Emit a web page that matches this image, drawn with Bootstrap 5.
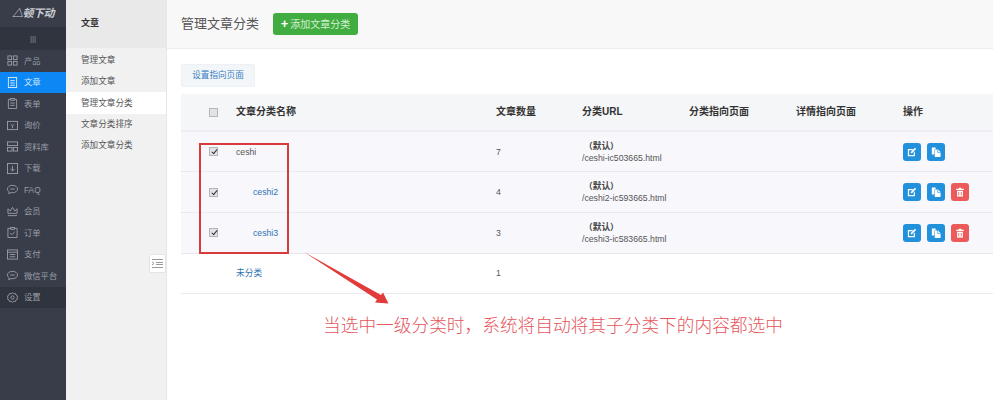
<!DOCTYPE html>
<html lang="zh">
<head>
    <meta charset="UTF-8">
    <meta name="viewport" content="width=device-width, initial-scale=1.0">
    <title>管理文章分类</title>
    <link href="https://cdn.jsdelivr.net/npm/bootstrap@5.3.3/dist/css/bootstrap.min.css" rel="stylesheet">
    <style>
        html, body { height: 400px; overflow: hidden; }
        body { font-family: "Liberation Sans", "Noto Sans CJK SC", sans-serif; font-size: 9px; color: #444; background: #fff; position: relative; }
        .side-main { width: 66px; height: 400px; background: #383d49; color: #9a9ea7; flex: none; font-size: 8.3px; }
        .side-logo { height: 27px; color: #c9ccd1; font-size: 11px; font-style: italic; font-weight: 700; letter-spacing: -.5px; }
        .side-toggle { height: 23px; background: #30343f; color: #8b8e96; font-size: 8px; font-weight: 300; }
        .side-item { height: 21.5px; padding-left: 7px; gap: 6px; color: #9a9ea7; text-decoration: none; }
        .side-item svg { width: 11px; height: 11px; flex: none; }
        .side-item.on { background: #0c87f4; color: #d8ecff; }
        .side-item.dim { background: #2f343e; }
        .side-sub { width: 101px; height: 400px; background: #f1f1f1; border-right: 1px solid #e6e6e6; flex: none; position: relative; font-size: 8.6px; }
        .sub-head { height: 48px; background: #e9e9e9; padding-left: 15px; color: #333; font-weight: 700; font-size: 9px; }
        .sub-list { padding-top: 2px; }
        .sub-item { height: 21.2px; padding-left: 15px; color: #555; text-decoration: none; }
        .sub-item.on { background: #fff; }
        .sub-fold { position: absolute; right: 0; top: 254px; width: 17px; height: 19px; background: #fff; border: 1px solid #e4e4e4; border-radius: 2px; }
        .page-head { height: 49px; background: #f8f8f8; border-bottom: 1px solid #ececec; padding-left: 14px; gap: 14px; }
        .page-title { font-size: 13px; color: #555; margin: 0; font-weight: 400; }
        .add-btn { background: #41ad41; color: #d6f0d6; font-size: 10px; height: 22px; width: 85px; padding: 0; border: 0; border-radius: 3px; }
        .add-btn b { color: #fff; font-size: 13px; line-height: 10px; margin-right: 2px; }
        .page-body { padding: 15px 0 0 14px; }
        .link-btn { display: flex; align-items: center; justify-content: center; width: 74px; height: 23px; padding: 0; background: #f3f6f9; border: 1px solid #edf0f4; border-radius: 2px; color: #3a7fc4; font-size: 8.6px; }
        .cat-table { width: 812px; table-layout: fixed; margin: 7px 0 0; font-size: 8.7px; }
        .cat-table th, .cat-table td { padding: 0; vertical-align: middle; border-bottom: 1px solid #e9e9ef; color: #555; line-height: 12px; }
        .cat-table th { height: 37px; background: #f5f6f8; color: #333; font-size: 10px; border-bottom: 2px solid #eeeff2; }
        .cat-table td { height: 40.7px; background: #fff; }
        .cat-table tr.picked td { background: #f8f7fc; }
        .cat-table a { color: #2e74b5; text-decoration: none; }
        .check-cell { padding-left: 28px !important; }
        .sub-name { padding-left: 17px !important; }
        .fake-check { display: block; width: 9px; height: 9px; background: #e2e3e6; border: 1px solid #b4b6bb; position: relative; }
        .fake-check.ticked::after { content: ""; position: absolute; left: 2.5px; top: 0; width: 3px; height: 6px; border: solid #333; border-width: 0 1px 1px 0; transform: rotate(40deg); }
        .act-row { gap: 6px; }
        .act-btn { width: 18px; height: 18px; border: 0; padding: 0; border-radius: 3px; background: #2191dc; }
        .act-btn.del { background: #ec5a5a; }
        .act-btn svg { width: 10px; height: 10px; display: block; margin: auto; }
        .url-tag { color: #444; font-weight: 700; padding-left: 2px; }
        .pick-box { position: absolute; left: 199px; top: 143px; width: 90px; height: 111px; border: 2px solid #d93a3a; pointer-events: none; }
        .pick-arrow { position: absolute; left: 300px; top: 248px; width: 92px; height: 60px; }
        .note-text { position: absolute; left: 323px; top: 312px; font-family: "Noto Sans CJK SC", sans-serif; font-weight: 300; font-size: 17.7px; line-height: 24px; color: #e5555c; white-space: nowrap; }
    </style>
</head>
<body>
<svg width="0" height="0" class="position-absolute">
    <symbol id="i-grid" viewBox="0 0 12 12" fill="none" stroke="currentColor"><rect x="1" y="1" width="4" height="4"/><rect x="7" y="1" width="4" height="4"/><rect x="1" y="7" width="4" height="4"/><rect x="7" y="7" width="4" height="4"/></symbol>
    <symbol id="i-doc" viewBox="0 0 12 12" fill="none" stroke="currentColor"><rect x="1.5" y=".5" width="9" height="11"/><path d="M3.5 4h5M3.5 6.5h5M3.5 9h5"/></symbol>
    <symbol id="i-form" viewBox="0 0 12 12" fill="none" stroke="currentColor"><path d="M4 1.500H1.500v10h9v-10H8"/><rect x="4" y=".5" width="4" height="2"/><path d="M3.500 5.500h5M3.500 8h5"/></symbol>
    <symbol id="i-quote" viewBox="0 0 12 12" fill="none" stroke="currentColor"><rect x=".5" y="1.500" width="11" height="9"/><path d="M4 4.500l2 2 2-2M6 6.500V9"/></symbol>
    <symbol id="i-lib" viewBox="0 0 12 12" fill="none" stroke="currentColor"><rect x=".5" y="1" width="11" height="4"/><rect x=".5" y="7" width="5" height="4"/><rect x="7" y="7" width="4.500" height="4"/></symbol>
    <symbol id="i-down" viewBox="0 0 12 12" fill="none" stroke="currentColor"><rect x=".5" y=".5" width="11" height="11"/><path d="M6 3v5.500M3.800 6.500L6 8.700l2.200-2.200"/></symbol>
    <symbol id="i-chat" viewBox="0 0 12 12" fill="none" stroke="currentColor"><path d="M6 1.500c3 0 5.500 1.600 5.500 4s-2.500 4-5.500 4c-.6 0-1.200 0-1.800-.2L2 10.800l.3-2.300C1.200 7.700.5 6.700.5 5.500c0-2.400 2.500-4 5.500-4z"/><path d="M3.500 5.500h5"/></symbol>
    <symbol id="i-crown" viewBox="0 0 12 12" fill="none" stroke="currentColor"><path d="M1 3l2.500 2.500L6 1.500l2.500 4L11 3v5H1zM1 10.500h10"/></symbol>
    <symbol id="i-order" viewBox="0 0 12 12" fill="none" stroke="currentColor"><path d="M4 1.500H1v10h10v-10H8"/><rect x="4" y=".5" width="4" height="2"/><path d="M3.500 6.500l2 2 3-3.500"/></symbol>
    <symbol id="i-pay" viewBox="0 0 12 12" fill="none" stroke="currentColor"><rect x=".5" y="1" width="11" height="10"/><path d="M.5 3.500h11M3 6h6M3 8.500h6"/></symbol>
    <symbol id="i-gear" viewBox="0 0 12 12" fill="none" stroke="currentColor"><path d="M6 .7l1.400 1.200 1.800-.2.700 1.700 1.600.9-.5 1.700.5 1.700-1.600.9-.7 1.700-1.800-.2L6 11.300l-1.400-1.200-1.800.2-.7-1.700-1.600-.9.500-1.700-.5-1.700 1.600-.9.700-1.700 1.800.2z"/><circle cx="6" cy="6" r="1.800"/></symbol>
    <symbol id="i-edit" viewBox="0 0 12 12"><path d="M1 2.500h6.500L6 4H2.500v5.500H8V7l1.500-1.500v5.500H1z" fill="#fff"/><path d="M4.500 7.500V6l5-5L11 2.500l-5 5z" fill="#fff"/></symbol>
    <symbol id="i-copy" viewBox="0 0 12 12"><path d="M1 .5h4.500V3H4v6H1z" fill="#fff"/><path d="M4.500 3h4L11.500 6v6h-7z" fill="#fff"/><path d="M8 3v3.500h3.500" fill="none" stroke="#2191dc" stroke-width=".8"/></symbol>
    <symbol id="i-trash" viewBox="0 0 12 12" fill="#fff"><path d="M4.500 1h3v1H10.500v1.500h-9V2h3z"/><path d="M2.500 4.500h7V11.500h-7z"/><path d="M4.500 6v4M7.500 6v4" stroke="#ec5a5a"/></symbol>
</svg>

<div class="d-flex">
    <nav class="side-main d-flex flex-column">
        <div class="side-logo d-flex align-items-center justify-content-center">△顿下动</div>
        <div class="side-toggle d-flex align-items-center justify-content-center">|||</div>
        <a class="side-item d-flex align-items-center" href="#"><svg><use href="#i-grid"/></svg>产品</a>
        <a class="side-item on d-flex align-items-center" href="#"><svg><use href="#i-doc"/></svg>文章</a>
        <a class="side-item d-flex align-items-center" href="#"><svg><use href="#i-form"/></svg>表单</a>
        <a class="side-item d-flex align-items-center" href="#"><svg><use href="#i-quote"/></svg>询价</a>
        <a class="side-item d-flex align-items-center" href="#"><svg><use href="#i-lib"/></svg>资料库</a>
        <a class="side-item d-flex align-items-center" href="#"><svg><use href="#i-down"/></svg>下载</a>
        <a class="side-item d-flex align-items-center" href="#"><svg><use href="#i-chat"/></svg>FAQ</a>
        <a class="side-item d-flex align-items-center" href="#"><svg><use href="#i-crown"/></svg>会员</a>
        <a class="side-item d-flex align-items-center" href="#"><svg><use href="#i-order"/></svg>订单</a>
        <a class="side-item d-flex align-items-center" href="#"><svg><use href="#i-pay"/></svg>支付</a>
        <a class="side-item d-flex align-items-center" href="#"><svg><use href="#i-chat"/></svg>微信平台</a>
        <a class="side-item dim d-flex align-items-center" href="#"><svg><use href="#i-gear"/></svg>设置</a>
    </nav>

    <aside class="side-sub">
        <div class="sub-head d-flex align-items-center">文章</div>
        <div class="sub-list">
            <a class="sub-item d-flex align-items-center" href="#">管理文章</a>
            <a class="sub-item d-flex align-items-center" href="#">添加文章</a>
            <a class="sub-item on d-flex align-items-center" href="#">管理文章分类</a>
            <a class="sub-item d-flex align-items-center" href="#">文章分类排序</a>
            <a class="sub-item d-flex align-items-center" href="#">添加文章分类</a>
        </div>
        <div class="sub-fold d-flex align-items-center justify-content-center">
            <svg width="11" height="9" viewBox="0 0 11 9" fill="none" stroke="#999"><path d="M0 .5h11M4 3.500h7M4 5.500h7M0 8.500h11M0 3l2 1.500L0 6"/></svg>
        </div>
    </aside>

    <main class="flex-grow-1">
        <div class="page-head d-flex align-items-center">
            <h1 class="page-title">管理文章分类</h1>
            <button type="button" class="btn add-btn"><b>+</b>添加文章分类</button>
        </div>
        <div class="page-body">
            <button type="button" class="btn link-btn">设置指向页面</button>
            <table class="table cat-table">
                <colgroup>
                    <col style="width:55px"><col style="width:260px"><col style="width:86px">
                    <col style="width:107px"><col style="width:107px"><col style="width:107px"><col style="width:90px">
                </colgroup>
                <thead>
                <tr>
                    <th class="check-cell"><span class="fake-check"></span></th>
                    <th>文章分类名称</th><th>文章数量</th><th>分类URL</th><th>分类指向页面</th><th>详情指向页面</th><th>操作</th>
                </tr>
                </thead>
                <tbody>
                <tr class="picked">
                    <td class="check-cell"><span class="fake-check ticked"></span></td>
                    <td>ceshi</td><td>7</td>
                    <td><div class="url-tag">（默认）</div>/ceshi-ic503665.html</td><td></td><td></td>
                    <td><div class="d-flex act-row">
                        <button type="button" class="btn act-btn"><svg><use href="#i-edit"/></svg></button>
                        <button type="button" class="btn act-btn"><svg><use href="#i-copy"/></svg></button>
                    </div></td>
                </tr>
                <tr class="picked">
                    <td class="check-cell"><span class="fake-check ticked"></span></td>
                    <td class="sub-name"><a href="#">ceshi2</a></td><td>4</td>
                    <td><div class="url-tag">（默认）</div>/ceshi2-ic593665.html</td><td></td><td></td>
                    <td><div class="d-flex act-row">
                        <button type="button" class="btn act-btn"><svg><use href="#i-edit"/></svg></button>
                        <button type="button" class="btn act-btn"><svg><use href="#i-copy"/></svg></button>
                        <button type="button" class="btn act-btn del"><svg><use href="#i-trash"/></svg></button>
                    </div></td>
                </tr>
                <tr class="picked">
                    <td class="check-cell"><span class="fake-check ticked"></span></td>
                    <td class="sub-name"><a href="#">ceshi3</a></td><td>3</td>
                    <td><div class="url-tag">（默认）</div>/ceshi3-ic583665.html</td><td></td><td></td>
                    <td><div class="d-flex act-row">
                        <button type="button" class="btn act-btn"><svg><use href="#i-edit"/></svg></button>
                        <button type="button" class="btn act-btn"><svg><use href="#i-copy"/></svg></button>
                        <button type="button" class="btn act-btn del"><svg><use href="#i-trash"/></svg></button>
                    </div></td>
                </tr>
                <tr>
                    <td></td><td><a href="#">未分类</a></td><td>1</td><td></td><td></td><td></td><td></td>
                </tr>
                </tbody>
            </table>
        </div>
    </main>
</div>

<!-- annotation drawn over the screenshot -->
<div class="pick-box"></div>
<svg class="pick-arrow" viewBox="0 0 92 60"><path d="M4 4L81 47 83 44.500 88.500 55.500 75 54.500 77 51.500z" fill="#e23b3b"/></svg>
<div class="note-text">当选中一级分类时，系统将自动将其子分类下的内容都选中</div>

<script src="https://cdn.jsdelivr.net/npm/bootstrap@5.3.3/dist/js/bootstrap.bundle.min.js"></script>
</body>
</html>
